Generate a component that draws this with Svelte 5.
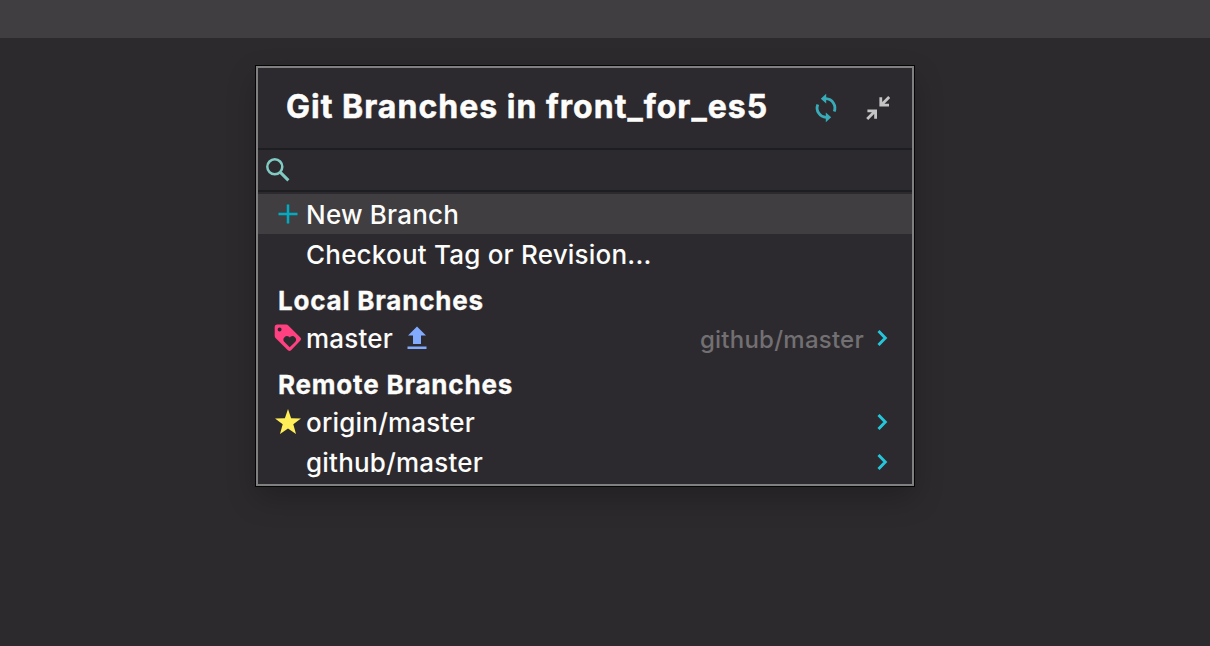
<script>
  const remotes = [
    { name: 'origin/master', starred: true },
    { name: 'github/master', starred: false },
  ];
</script>

{#snippet chevron()}
  <svg class="chevron" width="12" height="18" viewBox="0 0 12 18">
    <path d="M1.5 2 L8.3 9 L1.5 16" fill="none" stroke="#26c6da" stroke-width="2.9" />
  </svg>
{/snippet}

<div class="screen">
  <div class="bar"></div>
  <section class="popup">
    <header>
      <h1>Git Branches in front_for_es5</h1>
      <svg class="sync" width="32" height="32" viewBox="0 0 32 32" fill="none">
        <path d="M15.8 6.7A9.4 9.4 0 0 1 24.2 19.6" stroke="#38abb8" stroke-width="2.8" />
        <path d="M16.2 25.3A9.4 9.4 0 0 1 7.8 12.4" stroke="#38abb8" stroke-width="2.8" />
        <path d="M16.2 1.8V11.6L10.8 6.7Z M15.8 20.4V30.2L21.2 25.3Z" fill="#38abb8" />
      </svg>
      <svg class="collapse" width="24" height="24" viewBox="0 0 24 24" fill="none" stroke="#c4c4c4" stroke-width="2.8">
        <path d="M1.2 23L9.4 14.8M1.4 14.8H9.6V22.8" />
        <path d="M23.2 1L15 9.2M23 9.2H14.8V1.2" />
      </svg>
    </header>
    <div class="search">
      <svg width="24" height="24" viewBox="0 0 24 24" fill="none" stroke="#80cbc4">
        <circle cx="8.8" cy="8.8" r="7.5" stroke-width="2.5" />
        <path d="M14.4 14.4L22.4 22.4" stroke-width="3" />
      </svg>
    </div>
    <ul>
      <li class="row selected">
        <span class="icon">
          <svg width="20" height="20" viewBox="0 0 20 20" stroke="#00acc1" stroke-width="2.5">
            <path d="M10 .5V19.5M.5 10H19.5" />
          </svg>
        </span>
        <span class="label">New Branch</span>
      </li>
      <li class="row"><span class="icon"></span><span class="label">Checkout Tag or Revision...</span></li>
      <li class="group">Local Branches</li>
      <li class="row">
        <span class="icon">
          <svg class="tag" width="28" height="28" viewBox="0 0 28 28">
            <path fill="#ff4081" fill-rule="evenodd" d="M3.3.6H12.2Q13.4.6 14.3 1.5L26.4 13.4Q28 15 26.4 16.6L17.1 26.2Q15.5 27.8 13.9 26.2L1.5 14Q.7 13.2.7 12V3.2Q.7.6 3.3.6ZM5.6 3.5A2 2 0 1 0 5.6 7.5A2 2 0 1 0 5.6 3.5ZM15.7 23.2L10.2 17.7A3.5 3.5 0 0 1 15.1 12.8L15.7 13.5L16.4 12.8A3.5 3.5 0 0 1 21.3 17.7Z" />
          </svg>
        </span>
        <span class="label">master</span>
        <svg class="push" width="20" height="24" viewBox="0 0 20 24" fill="#82aaff">
          <path d="M10 .5L19 9.5H14V18H6V9.5H1ZM.5 20.5H19.5V23H.5Z" />
        </svg>
        <span class="tracking">github/master</span>
        {@render chevron()}
      </li>
      <li class="group">Remote Branches</li>
      {#each remotes as remote}
        <li class="row">
          <span class="icon">
            {#if remote.starred}
              <svg class="star" width="26" height="25" viewBox="0 0 26 25">
                <path fill="#ffee58" d="M13 0L16.1 9.2L26 9.5L18.3 15.3L21 25L13 19.4L5 25L7.7 15.3L0 9.5L9.9 9.2Z" />
              </svg>
            {/if}
          </span>
          <span class="label">{remote.name}</span>
          <span class="spacer"></span>
          {@render chevron()}
        </li>
      {/each}
    </ul>
  </section>
</div>

<style>
  :global(body) {
    margin: 0;
    background: #2d2a2e;
  }
  .screen {
    height: 646px;
    overflow: hidden;
    background: #2d2a2e;
    color: #fcfcfa;
    font-family: Inter, "Liberation Sans", sans-serif;
  }
  .bar {
    height: 38px;
    background: #403e41;
  }
  .popup {
    box-sizing: border-box;
    width: 658px;
    height: 420px;
    margin: 28px 0 0 256px;
    border: 2px solid #808080;
    background: #2d2a2f;
    box-shadow: 0 0 0 1px #050505, 0 12px 28px rgba(0, 0, 0, 0.24);
  }
  header {
    display: flex;
    align-items: center;
    height: 80px;
    padding: 0 22px 0 28px;
    border-bottom: 2px solid #1d1e20;
  }
  h1 {
    flex: 1;
    margin: 0;
    padding-bottom: 2px;
    font-size: 32px;
    line-height: 40px;
    font-weight: 700;
    letter-spacing: 1.02px;
    -webkit-text-stroke: 0.5px currentColor;
    white-space: nowrap;
  }
  .collapse {
    margin-left: 24px;
  }
  .search {
    display: flex;
    align-items: center;
    height: 40px;
    padding-left: 8px;
    border-bottom: 2px solid #1d1e20;
  }
  ul {
    margin: 0;
    padding: 2px 0 0;
    list-style: none;
  }
  .row {
    display: flex;
    align-items: center;
    height: 40px;
    padding: 0 23px 0 16px;
    font-size: 26px;
    line-height: 40px;
    white-space: nowrap;
  }
  .selected {
    background: #403e41;
  }
  .icon {
    display: flex;
    flex: none;
    align-items: center;
    justify-content: center;
    width: 28px;
    height: 40px;
    margin-right: 4px;
  }
  .label {
    padding-top: 2px;
    font-weight: 500;
    letter-spacing: 0.21px;
  }
  .group {
    box-sizing: border-box;
    height: 44px;
    padding: 7px 0 0 20px;
    font-size: 26px;
    line-height: 40px;
    font-weight: 700;
    letter-spacing: 0.8px;
    -webkit-text-stroke: 0.3px currentColor;
  }
  .push {
    margin-left: 14px;
  }
  .star {
    margin-bottom: 2px;
  }
  .tracking {
    margin-left: auto;
    margin-right: 13px;
    padding-top: 3px;
    font-size: 24px;
    font-weight: 500;
    letter-spacing: 0.25px;
    color: #727072;
  }
  .spacer {
    flex: 1;
  }
</style>
